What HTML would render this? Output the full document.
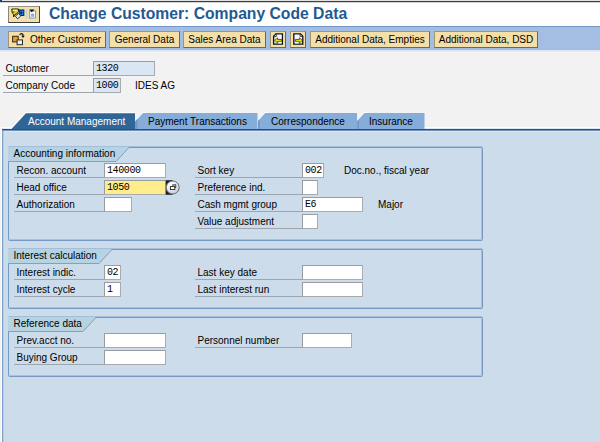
<!DOCTYPE html>
<html><head><meta charset="utf-8">
<style>
html,body{margin:0;padding:0;}
body{width:600px;height:442px;overflow:hidden;background:#f2f2f2;font-family:"Liberation Sans",sans-serif;font-size:10px;color:#000;position:relative;}
.abs{position:absolute;}
#title{left:0;top:0;width:600px;height:26px;background:#fff;}
#topline{left:0;top:0;width:600px;height:3px;background:linear-gradient(#e2e2e2 0,#e2e2e2 33.3%,#404040 33.3%,#404040 66.6%,#d2d2d2 66.6%,#d2d2d2 100%);}
#titletext{left:49px;top:4px;font-size:15.7px;line-height:20px;font-weight:bold;color:#1f5a92;white-space:nowrap;}
#toolbar{left:0;top:26px;width:600px;height:24px;background:#a3bde3;border-top:1px solid #7399c9;box-sizing:border-box;}
#tbshadow{left:0;top:50px;width:600px;height:2px;background:linear-gradient(#d4e0f0,#e9eef5);}
.btn{position:absolute;top:31px;height:17px;box-sizing:border-box;background:#f4dfa9;border:1px solid #6e684f;border-top-color:#a1966f;border-left-color:#a1966f;font-size:10px;line-height:15px;white-space:nowrap;text-align:center;color:#000;}
.lbl{position:absolute;height:15px;line-height:15px;border-bottom:1px solid #9ca6b0;box-sizing:border-box;white-space:nowrap;font-size:10px;padding-left:2.5px}
.fld{position:absolute;height:15px;box-sizing:border-box;background:#fff;border:1px solid #a8abb0;border-top-color:#999ca1;border-left-color:#999ca1;font-family:"Liberation Mono",monospace;font-size:10px;line-height:13px;padding-left:2px;white-space:nowrap;letter-spacing:-0.4px;}
.ro{background:#dbe6f4;}
.txt{position:absolute;white-space:nowrap;font-size:10px;line-height:15px;}
.grp{position:absolute;box-sizing:border-box;border:1px solid #7599c3;border-radius:1.5px;box-shadow:0 -1px 0 0 #a3bddb, inset -1px -1px 0 0 #a9c1dc;}
</style></head><body>
<div class="abs" id="title"></div>
<div class="abs" id="topline"></div>
<div class="abs" style="left:0;top:0;width:2px;height:1px;background:#1a3c78"></div>
<div class="abs" id="titletext">Change Customer: Company Code Data</div>
<div class="abs" id="toolbar"></div>
<div class="abs" id="tbshadow"></div>

<div class="btn" style="left:8px;top:6px;width:32px;height:17px;border-color:#9a9686 #3f3f3f #3f3f3f #8a8678;"></div>

<div class="btn" style="left:8px;width:98px;text-align:left;padding-left:21px;">Other Customer</div>
<div class="btn" style="left:109px;width:71px;">General Data</div>
<div class="btn" style="left:183px;width:83px;">Sales Area Data</div>
<div class="btn" style="left:270px;width:16px;"></div>
<div class="btn" style="left:290px;width:16px;"></div>
<div class="btn" style="left:310px;width:120px;">Additional Data, Empties</div>
<div class="btn" style="left:434px;width:104px;">Additional Data, DSD</div>


<!-- icons -->
<svg class="abs" style="left:0;top:0" width="600" height="52" viewBox="0 0 600 52">
  <!-- title button icon 1 -->
  <polygon points="11.8,9 18.6,9 18.6,11.6 16.4,14 15,14.4 13.6,17 13.6,14.4 12.2,13" fill="#e4d400" stroke="#1c1c0c" stroke-width="1"/>
  <polygon points="12.6,9.8 17.6,9.8 17.2,10.8 13,11" fill="#f8f4c0"/>
  <polygon points="12.6,11 14.4,11 14,13.6 12.8,12.6" fill="#8a8000"/>
  <rect x="19.2" y="10" width="4.6" height="5.4" fill="#1c8ce8" stroke="#08245c" stroke-width="1.1"/>
  <path d="M20.4 11.2 L21.6 11.2 L22.6 12.7 L21.6 14.2 L20.4 14.2 Z" fill="#08245c"/>
  <polygon points="18.4,13.6 20.8,16 17.6,18.8 15.4,16.2" fill="#f6f9ff" stroke="#1a1a1a" stroke-width="0.9"/>
  <polygon points="17.4,14.8 19.6,16 17.6,17.8 16.4,16.2" fill="#cfe0f6"/>
  <!-- separator -->
  <rect x="26" y="9" width="1" height="10" fill="#bccfe6"/>
  <!-- title button icon 2 -->
  <rect x="29.6" y="11" width="6" height="7" fill="#fff" stroke="#6a9ad0" stroke-width="1"/>
  <rect x="31" y="13.6" width="3.2" height="3.2" fill="#8fb0d6"/>
  <polygon points="29.2,9.6 34.4,9.6 31.8,12.2" fill="#0a0a0a"/>
  <!-- other customer icon -->
  <rect x="12.6" y="36.3" width="5.6" height="5.6" fill="#f39a10" stroke="#2a2a2a" stroke-width="1"/>
  <rect x="17.1" y="39.9" width="5.4" height="4.8" fill="#e6effb" stroke="#2a2a2a" stroke-width="1"/>
  <path d="M19.6 34.8 Q21.4 32.4 23 34.6 L23 36.6" fill="none" stroke="#1a1a1a" stroke-width="1.2"/>
  <polygon points="21.2,35.8 24.8,35.8 23,38" fill="#1a1a1a"/>
  <!-- page left -->
  <polygon points="276,33.8 282.4,33.8 282.4,44.2 273.6,44.2 273.6,36.2" fill="#dfe8f6" stroke="#111" stroke-width="1.3"/>
  <polygon points="273.6,36.4 276.2,36.4 276.2,33.8" fill="#fff" stroke="#111" stroke-width="0.8"/>
  <rect x="277.6" y="34.8" width="3.8" height="3.6" fill="#f4f8ff"/>
  <rect x="278.4" y="41.8" width="3.2" height="1.6" fill="#f4f8ff"/>
  <polygon points="274.6,40.4 277.6,37.9 277.6,39.5 281.6,39.5 281.6,41.3 277.6,41.3 277.6,42.9" fill="#fff000" stroke="#2a2a00" stroke-width="0.7"/>
  <!-- page right -->
  <polygon points="293.8,33.8 300.4,33.8 302.8,36.2 302.8,44.2 293.8,44.2" fill="#dfe8f6" stroke="#111" stroke-width="1.3"/>
  <polygon points="300.2,33.8 300.2,36.4 302.8,36.4" fill="#fff" stroke="#111" stroke-width="0.8"/>
  <rect x="295" y="34.8" width="3.8" height="3.6" fill="#f4f8ff"/>
  <rect x="295" y="41.8" width="3.2" height="1.6" fill="#f4f8ff"/>
  <polygon points="302.4,40.4 299.4,37.9 299.4,39.5 295.4,39.5 295.4,41.3 299.4,41.3 299.4,42.9" fill="#fff000" stroke="#2a2a00" stroke-width="0.7"/>
</svg>
<div class="lbl" style="left:3px;top:61px;width:90px;">Customer</div>
<div class="fld ro" style="left:93px;top:61px;width:62px;">1320</div>
<div class="lbl" style="left:3px;top:78px;width:90px;">Company Code</div>
<div class="fld ro" style="left:93px;top:78px;width:28px;">1000</div>
<div class="txt" style="left:135px;top:78px;">IDES AG</div>

<div class="abs" style="left:1px;top:127px;width:599px;height:1px;background:#fdfdfd;"></div>
<div class="abs" style="left:1px;top:128px;width:599px;height:1px;background:#dfe6ee;"></div>
<!-- tabs -->
<svg class="abs" style="left:0;top:110px" width="600" height="22" viewBox="0 110 600 22">
  <polyline points="10.5,129 25.7,112.7 135,112.7" fill="none" stroke="#fff" stroke-width="1.4"/>
  <polygon points="11,129.5 26,113.3 135,113.3 135,129.5" fill="#2f6597"/>
  <g>
    <polyline points="135.6,120.6 142.6,112.8 146,112.6" fill="none" stroke="#fff" stroke-width="1.2"/>
    <polygon points="135,129.5 135,121.6 143,113 257.5,113 257.5,129.5" fill="#86acda"/>
    <polygon points="135,129.5 135,121.6 137.6,118.8 137.6,129.5" fill="#7199ca"/>
  </g>
  <g>
    <polyline points="258.2,121 264.8,112.8 268,112.6" fill="none" stroke="#fff" stroke-width="1.3"/>
    <polygon points="258,129.5 258,121 265.2,113 357,113 357,129.5" fill="#86acda"/>
    <polygon points="258,129.5 258,121 259.8,119.2 259.8,129.5" fill="#7199ca"/>
  </g>
  <g>
    <polyline points="357.4,121 364,112.8 367,112.6" fill="none" stroke="#fff" stroke-width="1.3"/>
    <polygon points="357.2,129.5 357.2,121 364.4,113 424.5,113 424.5,129.5" fill="#86acda"/>
    <polygon points="357.2,129.5 357.2,121 359,119.2 359,129.5" fill="#7199ca"/>
  </g>
</svg>
<div class="txt" style="left:28px;top:114px;color:#fff;">Account Management</div>
<div class="txt" style="left:148px;top:114px;">Payment Transactions</div>
<div class="txt" style="left:271px;top:114px;">Correspondence</div>
<div class="txt" style="left:369px;top:114px;">Insurance</div>

<div class="abs" id="panel" style="left:2px;top:129px;width:598px;height:313px;background:#cddcea;"></div>
<div class="abs" style="left:2px;top:129px;width:598px;height:1px;background:#1f5389;"></div>
<div class="abs" style="left:2px;top:130px;width:598px;height:1px;background:#6d93bd;"></div>
<div class="abs" style="left:3px;top:131px;width:597px;height:1px;background:#dae6f2;"></div>
<div class="abs" style="left:1px;top:128px;width:1px;height:314px;background:#fbfbfb;"></div>
<div class="abs" style="left:2px;top:130px;width:1px;height:312px;background:#7fa3cc;"></div>
<div class="abs" style="left:3px;top:131px;width:1px;height:311px;background:#b2c9e3;"></div>
<div class="abs" style="left:4px;top:132px;width:1px;height:310px;background:#d0dfed;"></div>

<!-- group 1 -->
<div class="grp" style="left:8px;top:147px;width:475px;height:94px;"></div>
<svg class="abs" style="left:8px;top:147px" width="130" height="16"><polygon points="0,0 121,0 108,15 0,15" fill="#b6d3e2"/><polyline points="121,0.5 108,14.5 0,14.5" fill="none" stroke="#7fa1c7"/></svg>
<div class="txt" style="left:13.5px;top:146px;">Accounting information</div>

<div class="lbl" style="left:14px;top:163px;width:90px;">Recon. account</div>
<div class="fld" style="left:104px;top:163px;width:62px;">140000</div>
<div class="lbl" style="left:14px;top:180px;width:90px;">Head office</div>
<div class="fld" style="left:104px;top:180px;width:62px;background:#ffec8b;">1050</div>
<svg class="abs" style="left:164px;top:178px" width="20" height="20" viewBox="164 178 20 20">
  <defs><radialGradient id="hg" cx="0.4" cy="0.3" r="0.8"><stop offset="0" stop-color="#ffffff"/><stop offset="0.5" stop-color="#e6eef8"/><stop offset="1" stop-color="#b4b8bc"/></radialGradient></defs>
  <rect x="165.8" y="180.2" width="7" height="14.6" fill="#1e2228"/>
  <circle cx="172.7" cy="187.5" r="6.5" fill="url(#hg)" stroke="#6c6f74" stroke-width="1"/>
  <rect x="172.8" y="184.8" width="3" height="2.6" fill="#d8dce2" stroke="#222" stroke-width="0.8"/>
  <rect x="170.4" y="186.6" width="4.4" height="3" fill="#fff" stroke="#222" stroke-width="0.9"/>
</svg>
<div class="lbl" style="left:14px;top:197px;width:90px;">Authorization</div>
<div class="fld" style="left:104px;top:197px;width:28px;"></div>

<div class="lbl" style="left:195px;top:163px;width:107px;">Sort key</div>
<div class="fld" style="left:302px;top:163px;width:22px;">002</div>
<div class="txt" style="left:344px;top:163px;">Doc.no., fiscal year</div>
<div class="lbl" style="left:195px;top:180px;width:107px;">Preference ind.</div>
<div class="fld" style="left:302px;top:180px;width:16px;"></div>
<div class="lbl" style="left:195px;top:197px;width:107px;">Cash mgmt group</div>
<div class="fld" style="left:302px;top:197px;width:61px;">E6</div>
<div class="txt" style="left:378px;top:197px;">Major</div>
<div class="lbl" style="left:195px;top:214px;width:107px;">Value adjustment</div>
<div class="fld" style="left:302px;top:214px;width:16px;"></div>

<!-- group 2 -->
<div class="grp" style="left:8px;top:249px;width:475px;height:60px;"></div>
<svg class="abs" style="left:8px;top:249px" width="130" height="16"><polygon points="0,0 104,0 91,15 0,15" fill="#b6d3e2"/><polyline points="104,0.5 91,14.5 0,14.5" fill="none" stroke="#7fa1c7"/></svg>
<div class="txt" style="left:13.5px;top:248px;">Interest calculation</div>
<div class="lbl" style="left:14px;top:265px;width:90px;">Interest indic.</div>
<div class="fld" style="left:104px;top:265px;width:17px;">02</div>
<div class="lbl" style="left:14px;top:282px;width:90px;">Interest cycle</div>
<div class="fld" style="left:104px;top:282px;width:17px;">1</div>
<div class="lbl" style="left:195px;top:265px;width:107px;">Last key date</div>
<div class="fld" style="left:302px;top:265px;width:61px;"></div>
<div class="lbl" style="left:195px;top:282px;width:107px;">Last interest run</div>
<div class="fld" style="left:302px;top:282px;width:61px;"></div>

<!-- group 3 -->
<div class="grp" style="left:8px;top:317px;width:475px;height:60px;"></div>
<svg class="abs" style="left:8px;top:317px" width="130" height="16"><polygon points="0,0 88,0 75,15 0,15" fill="#b6d3e2"/><polyline points="88,0.5 75,14.5 0,14.5" fill="none" stroke="#7fa1c7"/></svg>
<div class="txt" style="left:13.5px;top:316px;">Reference data</div>
<div class="lbl" style="left:14px;top:333px;width:90px;">Prev.acct no.</div>
<div class="fld" style="left:104px;top:333px;width:62px;"></div>
<div class="lbl" style="left:14px;top:350px;width:90px;">Buying Group</div>
<div class="fld" style="left:104px;top:350px;width:62px;"></div>
<div class="lbl" style="left:195px;top:333px;width:107px;">Personnel number</div>
<div class="fld" style="left:302px;top:333px;width:50px;"></div>

</body></html>
